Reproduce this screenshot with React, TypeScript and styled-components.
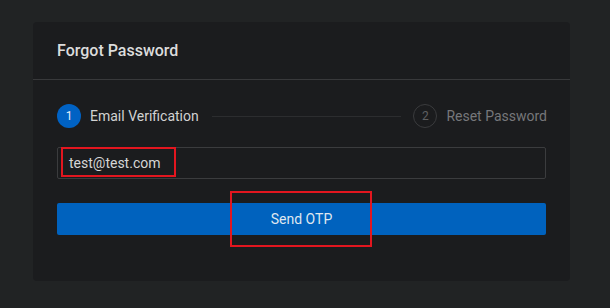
import React from 'react';
import styled, { createGlobalStyle } from 'styled-components';

const GlobalStyle = createGlobalStyle`
  html, body {
    margin: 0;
    padding: 0;
    background: #212324;
    font-family: Roboto, "Liberation Sans", sans-serif;
  }
`;

const Page = styled.div`
  width: 610px;
  height: 308px;
  box-sizing: border-box;
  padding: 22px 40px 0 33px;
`;

const Card = styled.div`
  width: 537px;
  height: 259px;
  background: #1b1c1e;
  border-radius: 4px;
`;

const Header = styled.div`
  height: 58px;
  box-sizing: border-box;
  padding: 0 24px;
  display: flex;
  align-items: center;
  border-bottom: 1px solid #38393b;
  font-size: 16px;
  font-weight: 500;
  color: #dcdcdc;
`;

const Body = styled.div`
  padding: 24px 24px 0;
  display: flex;
  flex-direction: column;
`;

const Steps = styled.div`
  display: flex;
  align-items: center;
  height: 24px;
  margin-right: -1px;
`;

const Step = styled.div`
  display: flex;
  align-items: center;
  gap: 9px;
  flex-shrink: 0;
`;

const Circle = styled.div<{ $active?: boolean }>`
  width: 24px;
  height: 24px;
  box-sizing: border-box;
  border-radius: 50%;
  display: flex;
  align-items: center;
  justify-content: center;
  font-size: 12px;
  background: ${(p) => (p.$active ? '#0062c4' : 'transparent')};
  border: ${(p) => (p.$active ? 'none' : '1px solid #3a3b3d')};
  color: ${(p) => (p.$active ? '#e6eef8' : '#5f6062')};
`;

const StepLabel = styled.span<{ $active?: boolean }>`
  font-size: 14px;
  color: ${(p) => (p.$active ? '#d2d2d2' : '#76777a')};
`;

const Connector = styled.div`
  flex: 1;
  height: 1px;
  background: #2c2d2f;
  margin: 0 12px 0 13px;
`;

const Field = styled.div`
  position: relative;
  margin-top: 19px;
  height: 32px;
  box-sizing: border-box;
  border: 1px solid #3b3c3e;
  border-radius: 2px;
  display: flex;
  align-items: center;
  padding: 0 11px;
  font-size: 14px;
  color: #d6d6d6;
`;

const Button = styled.div`
  position: relative;
  margin-top: 24px;
  height: 32px;
  background: #0062be;
  border-radius: 2px;
  display: flex;
  align-items: center;
  justify-content: center;
  font-size: 14px;
  color: #dfe7f0;
`;

const Mark = styled.div<{ $l: number; $t: number; $w: number; $h: number }>`
  position: absolute;
  left: ${(p) => p.$l}px;
  top: ${(p) => p.$t}px;
  width: ${(p) => p.$w}px;
  height: ${(p) => p.$h}px;
  box-sizing: border-box;
  border: 2px solid #e3161f;
  pointer-events: none;
`;

export default function App() {
  return (
    <>
      <GlobalStyle />
      <Page>
        <Card>
          <Header>Forgot Password</Header>
          <Body>
            <Steps>
              <Step>
                <Circle $active>1</Circle>
                <StepLabel $active>Email Verification</StepLabel>
              </Step>
              <Connector />
              <Step>
                <Circle>2</Circle>
                <StepLabel>Reset Password</StepLabel>
              </Step>
            </Steps>
            <Field>
              test@test.com
              <Mark $l={3} $t={-1} $w={115} $h={30} />
            </Field>
            <Button>
              Send OTP
              <Mark $l={173} $t={-12} $w={142} $h={56} />
            </Button>
          </Body>
        </Card>
      </Page>
    </>
  );
}
